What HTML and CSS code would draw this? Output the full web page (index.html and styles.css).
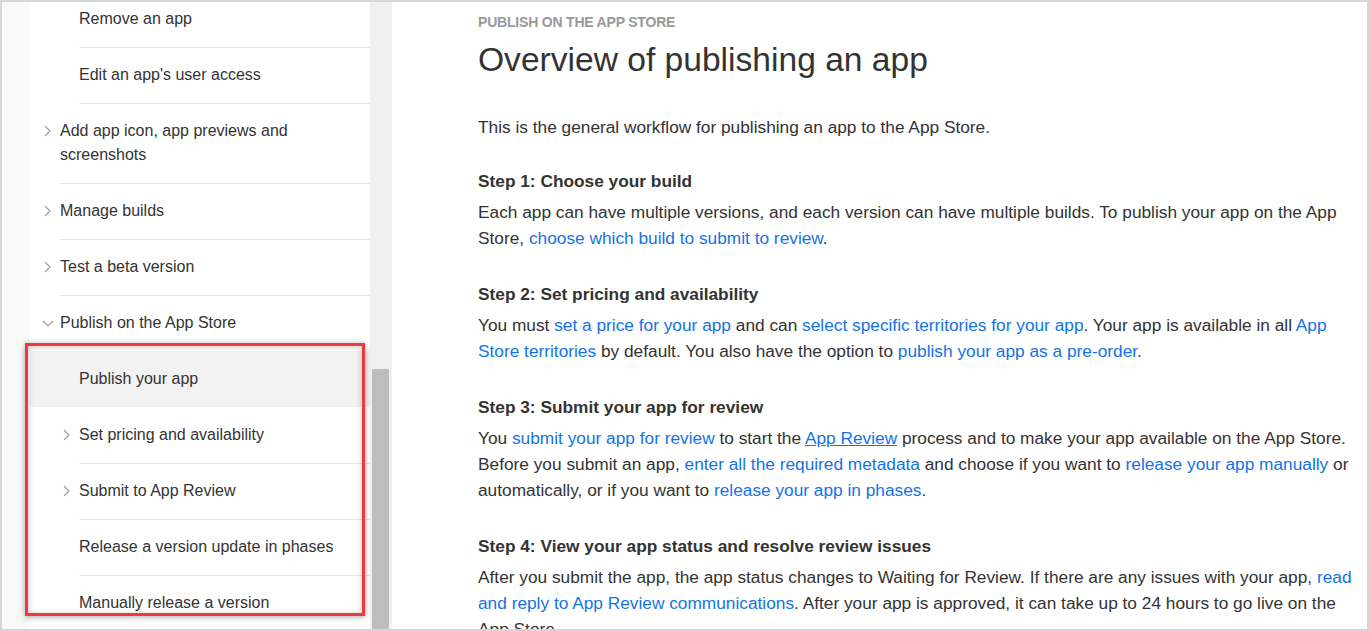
FILE: index.html
```html
<!DOCTYPE html>
<html lang="en">
<head>
<meta charset="utf-8">
<title>Overview of publishing an app</title>
<link rel="stylesheet" href="styles.css">
</head>
<body>
<div class="frame">
  <div class="gutter"></div>
  <nav class="sidebar">
    <ul class="nav">
      <li class="item lvl2"><span class="chev"></span><span class="label">Remove an app</span></li>
      <li class="item lvl2"><span class="chev"></span><span class="label">Edit an app's user access</span></li>
      <li class="item lvl1"><span class="chev"><svg width="7" height="12" viewBox="0 0 7 12"><path d="M1 1 L6 6 L1 11" /></svg></span><span class="label">Add app icon, app previews and screenshots</span></li>
      <li class="item lvl1"><span class="chev"><svg width="7" height="12" viewBox="0 0 7 12"><path d="M1 1 L6 6 L1 11" /></svg></span><span class="label">Manage builds</span></li>
      <li class="item lvl1"><span class="chev"><svg width="7" height="12" viewBox="0 0 7 12"><path d="M1 1 L6 6 L1 11" /></svg></span><span class="label">Test a beta version</span></li>
      <li class="item lvl1 open"><span class="chev"><svg class="down" width="12" height="7" viewBox="0 0 12 7"><path d="M1 1 L6 6 L11 1" /></svg></span><span class="label">Publish on the App Store</span></li>
      <li class="item lvl2 active"><span class="chev"></span><span class="label">Publish your app</span></li>
      <li class="item lvl2"><span class="chev"><svg width="7" height="12" viewBox="0 0 7 12"><path d="M1 1 L6 6 L1 11" /></svg></span><span class="label">Set pricing and availability</span></li>
      <li class="item lvl2"><span class="chev"><svg width="7" height="12" viewBox="0 0 7 12"><path d="M1 1 L6 6 L1 11" /></svg></span><span class="label">Submit to App Review</span></li>
      <li class="item lvl2"><span class="chev"></span><span class="label">Release a version update in phases</span></li>
      <li class="item lvl2"><span class="chev"></span><span class="label">Manually release a version</span></li>
    </ul>
  </nav>
  <div class="scroll"><div class="thumb"></div></div>
  <main class="main">
    <div class="eyebrow">PUBLISH ON THE APP STORE</div>
    <h1 class="title">Overview of publishing an app</h1>
    <p class="intro">This is the general workflow for publishing an app to the App Store.</p>
    <section class="step first">
      <h2>Step 1: Choose your build</h2>
      <p>Each app can have multiple versions, and each version can have multiple builds. To publish your app on the App Store, <a href="#">choose which build to submit to review</a>.</p>
    </section>
    <section class="step">
      <h2>Step 2: Set pricing and availability</h2>
      <p>You must <a href="#">set a price for your app</a> and can <a href="#">select specific territories for your app</a>. Your app is available in all <a href="#">App Store territories</a> by default. You also have the option to <a href="#">publish your app as a pre-order</a>.</p>
    </section>
    <section class="step">
      <h2>Step 3: Submit your app for review</h2>
      <p>You <a href="#">submit your app for review</a> to start the <a href="#" class="hover">App Review</a> process and to make your app available on the App Store. Before you submit an app, <a href="#">enter all the required metadata</a> and choose if you want to <a href="#">release your app manually</a> or automatically, or if you want to <a href="#">release your app in phases</a>.</p>
    </section>
    <section class="step">
      <h2>Step 4: View your app status and resolve review issues</h2>
      <p>After you submit the app, the app status changes to Waiting for Review. If there are any issues with your app, <a href="#">read and reply to App Review communications</a>. After your app is approved, it can take up to 24 hours to go live on the App Store.</p>
    </section>
  </main>
  <div class="callout"></div>
</div>
</body>
</html>
```

FILE: styles.css
```css
html, body {
  margin: 0;
  padding: 0;
  background: #fff;
}

body {
  font-family: "Liberation Sans", Arial, sans-serif;
  color: #333;
}

.frame {
  position: relative;
  width: 1370px;
  height: 631px;
  box-sizing: border-box;
  border: 2px solid #d6d6d6;
  border-right-width: 3px;
  display: flex;
  overflow: hidden;
  background: #fff;
}

.gutter {
  width: 28px;
  flex: none;
  background: #f9f9f9;
}

.sidebar {
  width: 340px;
  flex: none;
  overflow: hidden;
  background: #fff;
}

.nav {
  list-style: none;
  margin: -11px 0 0;
  padding: 0;
}

.item {
  display: flex;
  align-items: flex-start;
  font-size: 16px;
  line-height: 24px;
  color: #333;
}

.item.lvl1 {
  padding-left: 14px;
}

.item.lvl2 {
  padding-left: 33px;
}

.chev {
  flex: none;
  width: 16px;
  height: 24px;
  margin-top: 16px;
  display: flex;
  align-items: center;
}

.chev svg {
  display: block;
  fill: none;
  stroke: #9a9a9a;
  stroke-width: 1.1;
}

.chev svg.down {
  margin-left: -2px;
  margin-top: 1px;
}

.label {
  flex: 1;
  padding: 16px 0;
  border-bottom: 1px solid #e8e8e8;
  margin-bottom: -1px;
}

.item.open .label,
.item.active .label {
  border-bottom-color: transparent;
}

.item.active {
  background: #f2f2f2;
}

.scroll {
  width: 22px;
  flex: none;
  background: #f0f0f0;
  box-sizing: border-box;
  padding: 367px 3px 0 2px;
  display: flex;
}

.thumb {
  flex: 1;
  background: #bdbdbd;
}

.main {
  flex: 1;
  min-width: 0;
  padding: 10px 5px 0 86px;
  overflow: hidden;
}

.eyebrow {
  font-size: 14px;
  line-height: 20px;
  font-weight: bold;
  color: #999;
  letter-spacing: -0.2px;
}

.title {
  margin: 8px 0 0;
  font-size: 33.6px;
  line-height: 40px;
  font-weight: normal;
  color: #333;
}

.intro {
  margin: 34px 0 0;
  font-size: 17.3px;
  line-height: 26px;
}

.step {
  margin-top: 30px;
}

.step.first {
  margin-top: 28px;
}

.step h2 {
  margin: 0 0 5px;
  font-size: 17.3px;
  line-height: 26px;
  font-weight: bold;
  color: #333;
}

.step p {
  margin: 0;
  font-size: 17.3px;
  line-height: 26px;
}

a {
  color: #1473e6;
  text-decoration: none;
}

a.hover {
  text-decoration: underline;
}

.callout {
  position: absolute;
  left: 23px;
  top: 341px;
  width: 340px;
  height: 273px;
  box-sizing: border-box;
  border: 3px solid #f0393f;
  box-shadow: 0 1px 6px rgba(0, 0, 0, 0.35), inset 0 1px 6px rgba(0, 0, 0, 0.22);
  pointer-events: none;
}
```
